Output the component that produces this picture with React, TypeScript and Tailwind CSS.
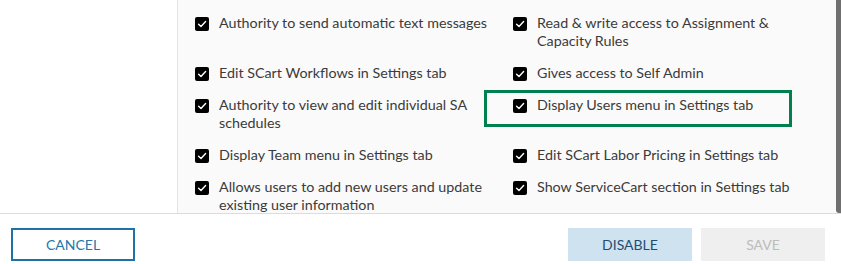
import React from "react";

const Check = () => (
  <span className="mt-[3px] flex h-[14px] w-[14px] shrink-0 items-center justify-center rounded-[2px] bg-black">
    <svg width="10" height="10" viewBox="0 0 10 10" fill="none">
      <path d="M1.6 5.2 L4 7.5 L8.6 2.6" stroke="white" strokeWidth="1.4" strokeLinecap="round" strokeLinejoin="round" />
    </svg>
  </span>
);

const Item = ({ text }: { text: string }) => (
  <div className="flex items-start gap-[10px]">
    <Check />
    <span className="text-[14.3px] leading-[18px] text-[#3b3b3b]">{text}</span>
  </div>
);

const rows: [string, string][] = [
  ["Authority to send automatic text messages", "Read & write access to Assignment & Capacity Rules"],
  ["Edit SCart Workflows in Settings tab", "Gives access to Self Admin"],
  ["Authority to view and edit individual SA schedules", "Display Users menu in Settings tab"],
  ["Display Team menu in Settings tab", "Edit SCart Labor Pricing in Settings tab"],
  ["Allows users to add new users and update existing user information", "Show ServiceCart section in Settings tab"],
];

export default function App() {
  return (
    <div className="flex h-[264px] w-[841px] flex-col overflow-hidden bg-white font-['Lato','Noto_Sans',sans-serif]">
      <div className="flex h-[213px] shrink-0">
        <div className="w-[178px] shrink-0 border-r border-[#e3e3e3] bg-white" />
        <div className="relative flex flex-1 bg-[#fafafa]">
          <div className="grid flex-1 grid-cols-[318px_290px] content-start gap-y-[14px] pl-[17px] pt-[14px]">
            {rows.map(([a, b], i) => (
              <React.Fragment key={i}>
                <Item text={a} />
                <Item text={b} />
              </React.Fragment>
            ))}
          </div>
          <div className="absolute left-[306px] top-[90px] h-[37px] w-[308px] border-[3px] border-[#00804f]" />
          <div className="w-[5px] shrink-0 rounded-bl-[3px] bg-[#6f6f6f]" />
        </div>
      </div>
      <div className="flex flex-1 items-start border-t border-[#dcdcdc] pl-[11px] pr-[16px] pt-[14px]">
        <button className="flex h-[33px] w-[124px] items-center justify-center border-2 border-[#2071a8] pb-[1px] text-[14px] text-[#2676ab]">
          CANCEL
        </button>
        <div className="flex-1" />
        <button className="flex h-[33px] w-[124px] items-center justify-center bg-[#cfe2f0] pb-[1px] text-[14px] text-[#1e4e72]">
          DISABLE
        </button>
        <button className="ml-[9px] flex h-[33px] w-[124px] items-center justify-center bg-[#efefef] text-[14px] text-[#bcbcbc]">
          SAVE
        </button>
      </div>
    </div>
  );
}
